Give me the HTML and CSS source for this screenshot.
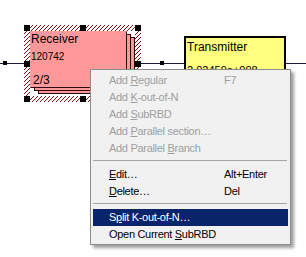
FILE: index.html
```html
<!DOCTYPE html>
<html>
<head>
<meta charset="utf-8">
<link rel="stylesheet" href="styles.css">
</head>
<body>
<div class="canvas">
  <div class="wire"></div>
  <div class="dot dot-a"></div>
  <div class="dot dot-b"></div>

  <div class="frame">
    <div class="stack">
      <div class="card card-3"></div>
      <div class="card card-2"></div>
      <div class="card card-1">
        <div class="r-name">Receiver</div>
        <div class="r-id">120742</div>
        <div class="r-k">2/3</div>
      </div>
    </div>
    <div class="handle h-tl"></div>
    <div class="handle h-tm"></div>
    <div class="handle h-tr"></div>
    <div class="handle h-ml"></div>
    <div class="handle h-mr"></div>
    <div class="handle h-bl"></div>
    <div class="handle h-bm"></div>
    <div class="handle h-br"></div>
  </div>

  <div class="tx">
    <div class="tx-name">Transmitter</div>
    <div class="tx-val">2.02459e+008</div>
  </div>

  <div class="menu">
    <div class="item dis"><span>Add <u>R</u>egular</span><span>F7</span></div>
    <div class="item dis"><span>Add <u>K</u>-out-of-N</span><span></span></div>
    <div class="item dis"><span>Add <u>S</u>ubRBD</span><span></span></div>
    <div class="item dis"><span>Add <u>P</u>arallel section…</span><span></span></div>
    <div class="item dis"><span>Add Parallel <u>B</u>ranch</span><span></span></div>
    <div class="sep"></div>
    <div class="item"><span><u>E</u>dit…</span><span>Alt+Enter</span></div>
    <div class="item"><span><u>D</u>elete…</span><span>Del</span></div>
    <div class="sep"></div>
    <div class="item sel"><span>S<u>p</u>lit K-out-of-N…</span><span></span></div>
    <div class="item"><span>Open Current <u>S</u>ubRBD</span><span></span></div>
  </div>
</div>
</body>
</html>
```

FILE: styles.css
```css
html, body {
  margin: 0;
  padding: 0;
  background: #fff;
}
.canvas {
  position: relative;
  width: 306px;
  height: 257px;
  overflow: hidden;
  font-family: "Liberation Sans", Arial, sans-serif;
}
.wire {
  position: absolute;
  left: 0;
  top: 63px;
  width: 306px;
  height: 1px;
  background: #1c1c3c;
}
.dot {
  position: absolute;
  width: 4px;
  height: 4px;
  background: #000;
  top: 61px;
}
.dot-a { left: 3px; }
.dot-b { left: 160px; }

.frame {
  position: absolute;
  left: 24px;
  top: 25px;
  width: 117px;
  height: 77px;
  box-sizing: border-box;
  padding: 6px;
  background: repeating-linear-gradient(135deg, #7a1010 0 1.3px, #ffffff 1.3px 2.83px);
}
.stack {
  background: #fff;
  height: 100%;
  display: grid;
  grid-template-columns: 97px;
  grid-template-rows: 57px;
  align-items: start;
}
.card {
  grid-area: 1 / 1;
  width: 97px;
  height: 57px;
  box-sizing: border-box;
  background: #ff9999;
  border: 1px solid #2a0a0a;
}
.card-1 {
  border-top-color: #ff9999;
  border-left-color: #ff9999;
  display: flex;
  flex-direction: column;
  color: #000;
}
.card-2 { margin: 3px 0 0 4px; }
.card-3 { margin: 6px 0 0 8px; }
.r-name {
  font-size: 12px;
  line-height: 14px;
}
.r-id {
  font-size: 10px;
  line-height: 11px;
  margin-top: 5px;
}
.r-k {
  font-size: 12px;
  line-height: 14px;
  margin-top: 11px;
  padding-left: 2px;
}
.handle {
  position: absolute;
  width: 6px;
  height: 6px;
  background: #000;
}
.h-tl { left: 0; top: 0; }
.h-tm { left: 56px; top: 0; }
.h-tr { left: 111px; top: 0; }
.h-ml { left: 0; top: 36px; }
.h-mr { left: 111px; top: 36px; }
.h-bl { left: 0; top: 71px; }
.h-bm { left: 56px; top: 71px; }
.h-br { left: 111px; top: 71px; }

.tx {
  position: absolute;
  left: 184px;
  top: 36px;
  width: 102px;
  height: 60px;
  box-sizing: border-box;
  border: 2px solid #000;
  background: #ffff80;
  padding: 2px 0 0 1px;
}
.tx-name {
  font-size: 12px;
  line-height: 14px;
}
.tx-val {
  font-size: 11px;
  line-height: 13px;
  margin-top: 10px;
  height: 5px;
  overflow: hidden;
}

.menu {
  position: absolute;
  left: 90px;
  top: 69px;
  width: 201px;
  box-sizing: border-box;
  border: 1px solid #8c8c8c;
  background: #f1f1f1;
  padding: 2px 2px 1px 2px;
  box-shadow: 3px 3px 3px rgba(0, 0, 0, 0.38);
  font-size: 11px;
  letter-spacing: -0.3px;
}
.item {
  display: grid;
  grid-template-columns: 115px auto;
  height: 17px;
  line-height: 17px;
  padding-left: 16px;
  color: #000;
  white-space: nowrap;
}
.item.dis {
  color: #a0a0a0;
}
.item.sel {
  background: #0a246a;
  color: #fff;
}
.sep {
  height: 0;
  margin: 3px 1px 5px 0;
  border-top: 1px solid #a6a6a6;
}
```
